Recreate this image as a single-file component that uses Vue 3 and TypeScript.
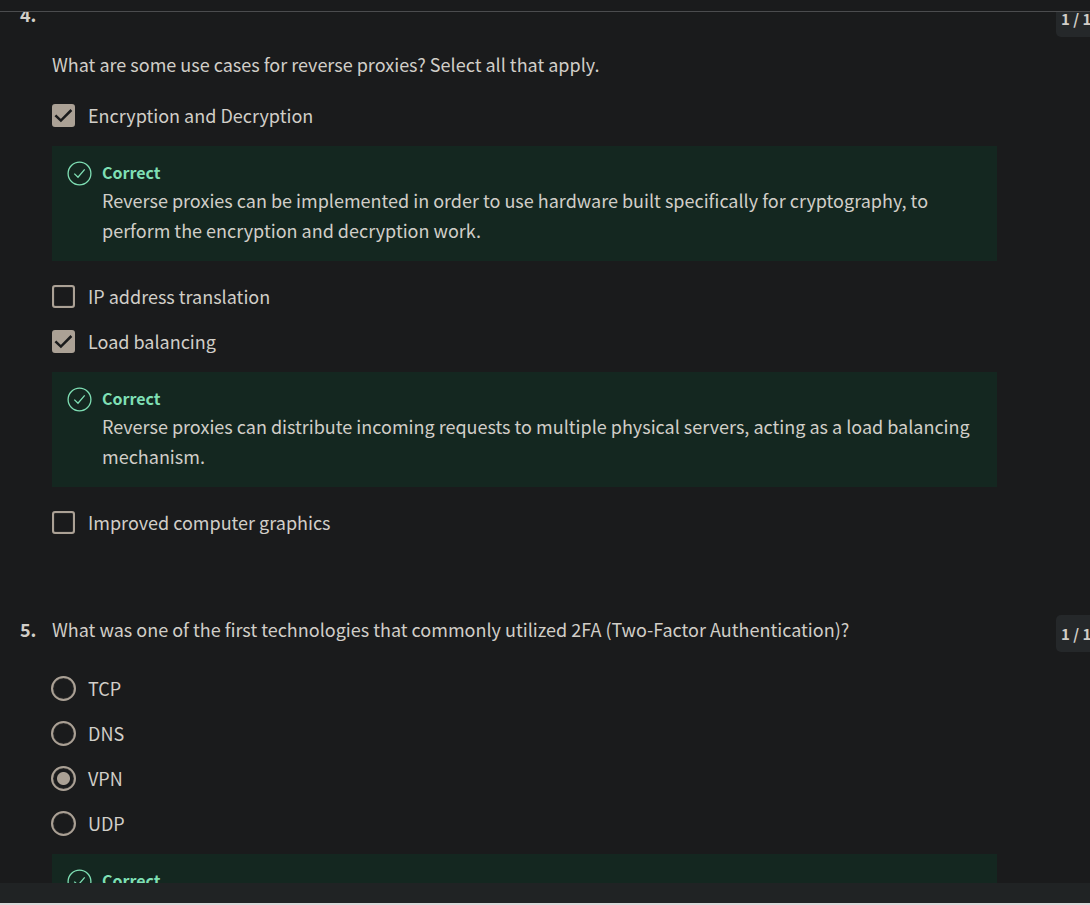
<script setup lang="ts">
import { ref } from 'vue'

interface Option {
  label: string
  checked: boolean
  feedback?: string
}

interface Question {
  id: string
  number: number
  prompt: string
  kind: 'checkbox' | 'radio'
  score: string
  options: Option[]
}

const questions = ref<Question[]>([
  {
    id: 'q4',
    number: 4,
    prompt: 'What are some use cases for reverse proxies? Select all that apply.',
    kind: 'checkbox',
    score: '1 / 1',
    options: [
      {
        label: 'Encryption and Decryption',
        checked: true,
        feedback:
          'Reverse proxies can be implemented in order to use hardware built specifically for cryptography, to perform the encryption and decryption work.',
      },
      { label: 'IP address translation', checked: false },
      {
        label: 'Load balancing',
        checked: true,
        feedback:
          'Reverse proxies can distribute incoming requests to multiple physical servers, acting as a load balancing mechanism.',
      },
      { label: 'Improved computer graphics', checked: false },
    ],
  },
  {
    id: 'q5',
    number: 5,
    prompt: 'What was one of the first technologies that commonly utilized 2FA (Two-Factor Authentication)?',
    kind: 'radio',
    score: '1 / 1',
    options: [
      { label: 'TCP', checked: false },
      { label: 'DNS', checked: false },
      { label: 'VPN', checked: true },
      { label: 'UDP', checked: false, feedback: '' },
    ],
  },
])

function choose(question: Question, index: number): void {
  question.options.forEach((option, i) => {
    if (question.kind === 'radio') option.checked = i === index
    else if (i === index) option.checked = !option.checked
  })
}
</script>

<template>
  <div class="page">
    <header class="topbar"></header>
    <main class="scroller">
      <section v-for="q in questions" :key="q.id" class="question" :class="q.kind">
        <div class="number">{{ q.number }}.</div>
        <div class="body">
          <p class="prompt">{{ q.prompt }}</p>
          <template v-for="(option, i) in q.options" :key="option.label">
            <label class="option" :for="`${q.id}-${i}`">
              <span class="control">
                <input
                  :id="`${q.id}-${i}`"
                  :type="q.kind"
                  :name="q.id"
                  :checked="option.checked"
                  @change="choose(q, i)"
                />
                <svg v-if="q.kind === 'checkbox' && option.checked" class="tick" viewBox="0 0 23 23" aria-hidden="true">
                  <path d="M3.4 11.3 8.9 16.6 19.4 6" />
                </svg>
              </span>
              <span class="label">{{ option.label }}</span>
            </label>
            <div v-if="option.feedback !== undefined" class="feedback">
              <svg class="badge-icon" viewBox="0 0 25 25" aria-hidden="true">
                <circle cx="12.5" cy="12.5" r="11.4" />
                <path d="M7.3 12.6 11 16.2 17.7 8.4" />
              </svg>
              <div>
                <strong class="verdict">Correct</strong>
                <p class="explanation">{{ option.feedback }}</p>
              </div>
            </div>
          </template>
        </div>
        <div class="score">{{ q.score }}</div>
      </section>
    </main>
    <footer class="bottombar"></footer>
  </div>
</template>

<style>
body {
  background: #1a1b1c;
}
</style>

<style scoped>
.page {
  display: flex;
  flex-direction: column;
  height: 100vh;
  overflow: hidden;
  background: #1a1b1c;
  color: #d1cec8;
  font-family: 'Noto Sans CJK SC', 'Noto Sans', sans-serif;
  font-size: 18px;
  line-height: 30px;
}

.topbar {
  flex: none;
  height: 11px;
  border-bottom: 1px solid #4b4c4e;
}

.scroller {
  flex: 1;
  min-height: 0;
  overflow: hidden;
}

.question {
  display: grid;
  grid-template-columns: 32px 1fr 34px;
  align-items: start;
  padding-left: 20px;
}

.question.checkbox {
  margin-top: -12px;
  margin-bottom: 70px;
}

.number,
.prompt {
  line-height: 28px;
}

.number {
  font-weight: 700;
}

.body {
  margin-right: 59px;
}

.prompt {
  margin: 0 0 23px;
}

.checkbox .prompt {
  margin: 50px 0 15px;
}

.option {
  display: flex;
  align-items: center;
  gap: 13px;
  height: 45px;
}

.label {
  padding-bottom: 2px;
}

.control {
  display: grid;
  flex: none;
  width: 23px;
  justify-content: center;
}

.control > * {
  grid-area: 1 / 1;
}

input {
  appearance: none;
  box-sizing: border-box;
  margin: 0;
  width: 23px;
  height: 23px;
  border: 2px solid #aba195;
  border-radius: 3px;
  box-shadow: inset 0 0 1px #aba195;
}

input[type='checkbox']:checked {
  background: #aba195;
}

input[type='radio'] {
  width: 25px;
  height: 25px;
  border-radius: 50%;
}

input[type='radio']:checked {
  background: radial-gradient(circle, #aba195 6px, transparent 7px);
}

.tick {
  width: 23px;
  height: 23px;
  fill: none;
  stroke: #1a1b1c;
  stroke-width: 2.5;
  pointer-events: none;
}

.feedback {
  display: flex;
  align-items: flex-start;
  gap: 10px;
  margin: 8px 0 13px;
  padding: 13px 15px 16px;
  background: #142720;
}

.badge-icon {
  flex: none;
  width: 25px;
  height: 25px;
  margin-top: 2px;
  fill: none;
  stroke: #7fdfb4;
  stroke-width: 1.3;
}

.verdict {
  display: block;
  color: #7fdfb4;
  font-size: 16px;
  line-height: 26px;
}

.explanation {
  margin: 0;
}

.score {
  box-sizing: border-box;
  overflow: hidden;
  height: 37px;
  padding: 4px 0 0 5px;
  border-radius: 5px 0 0 5px;
  background: #25282a;
  font-size: 15px;
  font-weight: 700;
  white-space: nowrap;
}

.bottombar {
  flex: none;
  height: 20px;
  background: #202324;
  border-bottom: 2px solid #d8d8d8;
}
</style>
